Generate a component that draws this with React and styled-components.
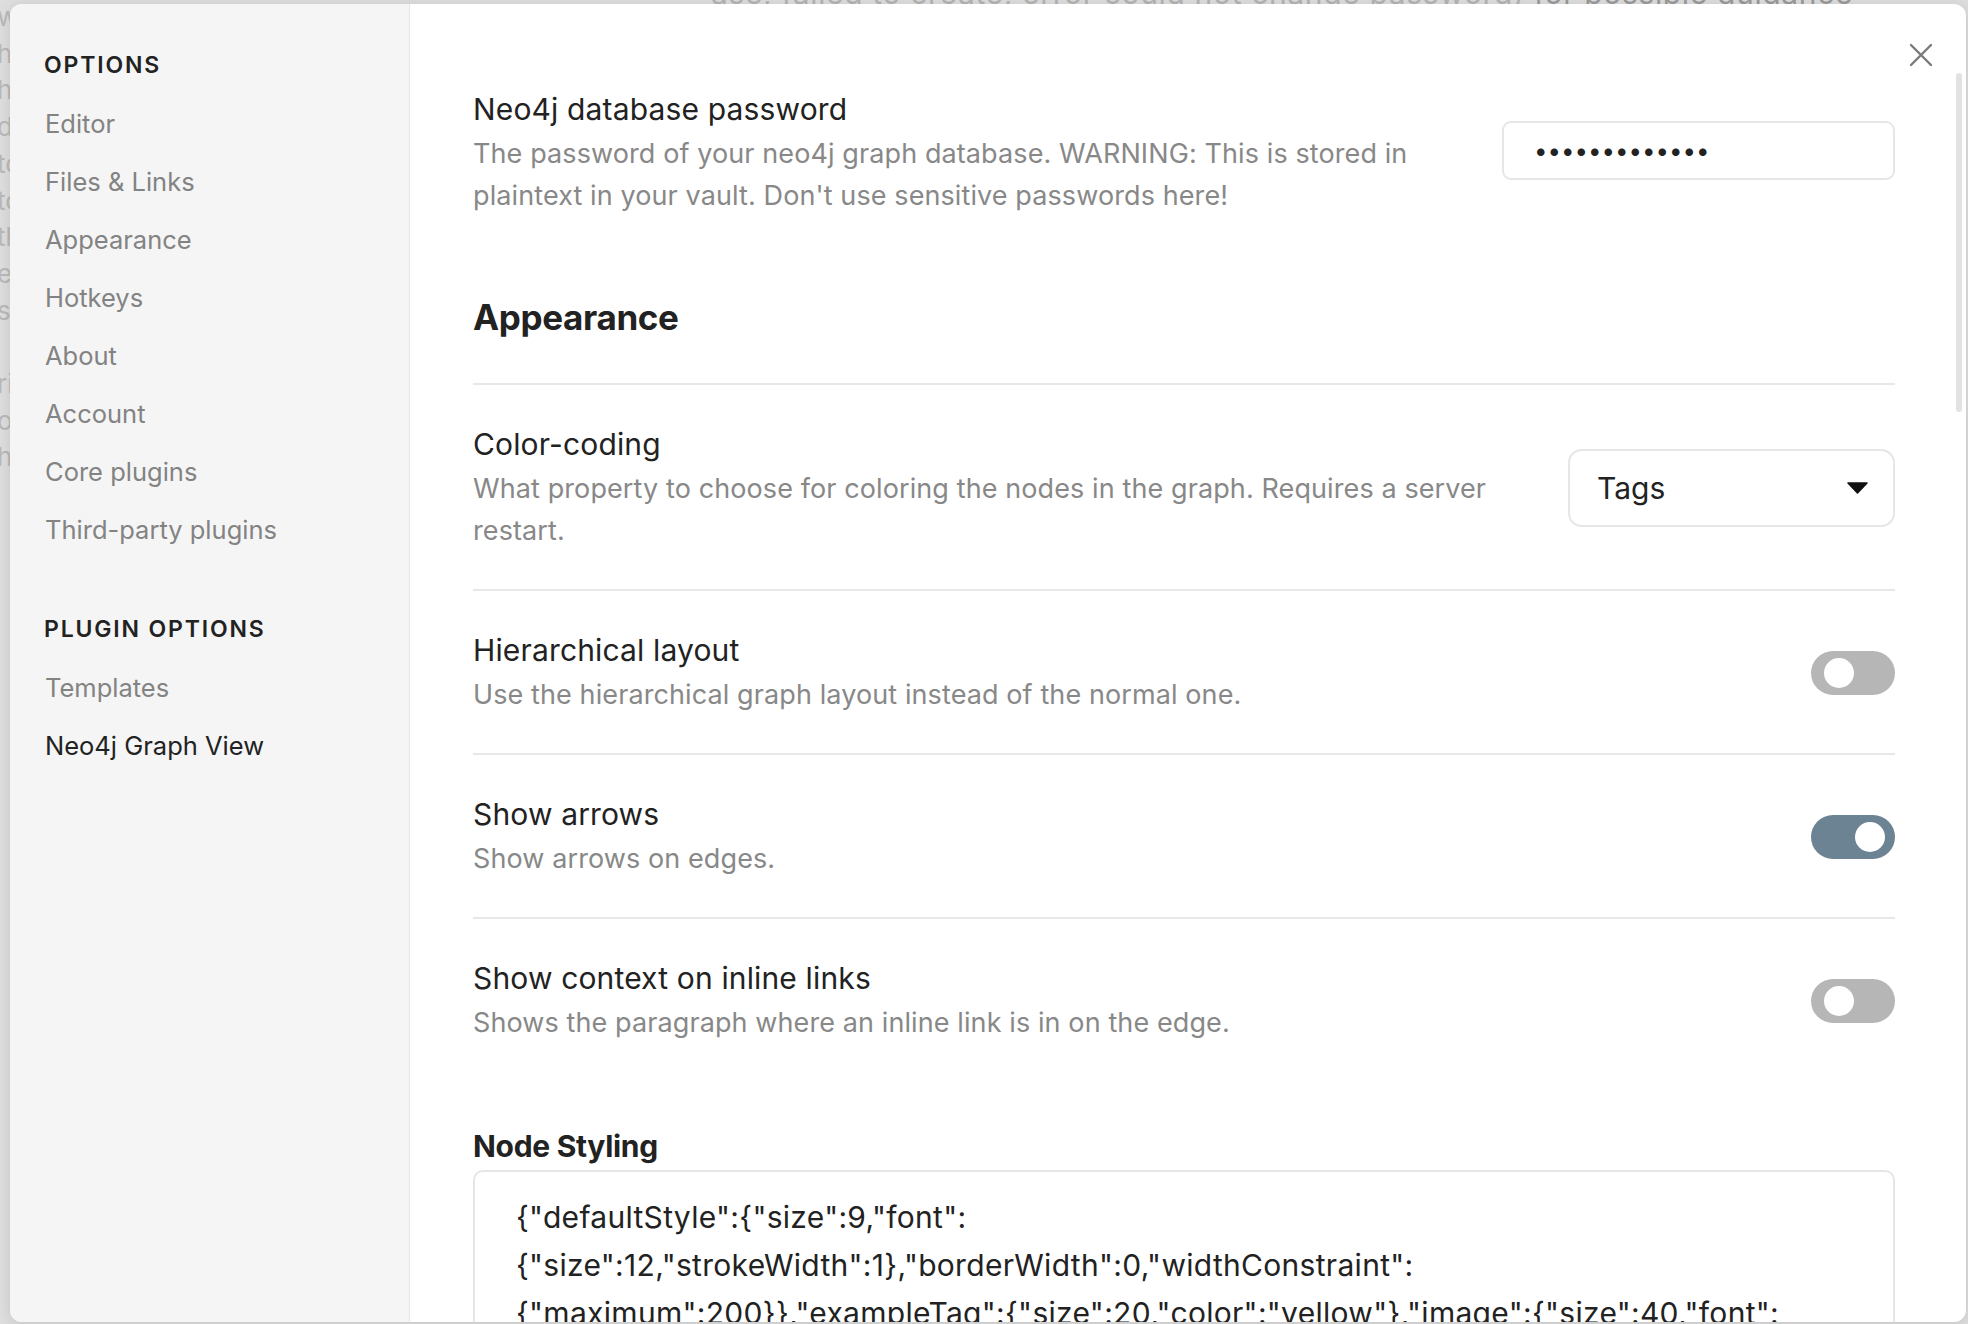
import React from 'react';
import styled, { createGlobalStyle } from 'styled-components';

const GlobalStyle = createGlobalStyle`
  html, body {
    margin: 0;
    padding: 0;
  }
  body {
    width: 1968px;
    height: 1324px;
    overflow: hidden;
    background: #dedede;
    font-family: Inter, "Noto Sans", sans-serif;
    -webkit-font-smoothing: antialiased;
  }
  * {
    box-sizing: border-box;
  }
`;

const Page = styled.div`
  position: relative;
  width: 1968px;
  height: 1324px;
  overflow: hidden;
  background: #dedede;
`;

/* the note that sits behind the settings modal */
const TopStrip = styled.div`
  height: 8px;
  overflow: hidden;
  display: flex;
  align-items: flex-end;
  padding-left: 711px;
  font-size: 30px;
  line-height: 30px;
  letter-spacing: 0.65px;
  white-space: nowrap;
  color: #b4b4b4;

  b {
    font-weight: 400;
    color: #9a9a9a;
  }
`;

const BackNote = styled.div`
  margin: -9px 0 0 -3px;
  font-size: 26px;
  line-height: 36.7px;
  color: #b9b9b9;
`;

const Modal = styled.div`
  position: absolute;
  top: 4px;
  left: 10px;
  right: 2px;
  bottom: 2px;
  display: flex;
  background: #fff;
  border-radius: 12px;
  overflow: hidden;
  box-shadow: 0 2px 14px rgba(0, 0, 0, 0.12);
`;

const Sidebar = styled.nav`
  flex: none;
  width: 400px;
  padding: 46px 0 0 24px;
  background: #f5f5f5;
  border-right: 1px solid #e6e6e6;
`;

const NavGroup = styled.div`
  margin-top: ${p => p.$gap || 0}px;
`;

const NavHeader = styled.div`
  padding-left: 10px;
  margin-bottom: 15px;
  font-size: 23px;
  line-height: 30px;
  font-weight: 600;
  letter-spacing: 0.08em;
  color: #222;
`;

const NavItem = styled.div`
  padding: 12px 11px;
  font-size: 25.5px;
  line-height: 34px;
  color: ${p => (p.$active ? '#222' : '#838383')};
`;

const Content = styled.main`
  flex: 1;
  min-width: 0;
  padding: 46px 71px 0 63px;
  overflow: hidden;
`;

const CloseButton = styled.div`
  position: absolute;
  top: 39px;
  right: 33px;
  width: 24px;
  height: 24px;
  color: #7a7a7a;
  display: flex;
`;

const ScrollThumb = styled.div`
  position: absolute;
  top: 69px;
  right: 4px;
  width: 6px;
  height: 339px;
  border-radius: 3px;
  background: #e2e2e2;
`;

const SettingItem = styled.div`
  display: flex;
  align-items: center;
  padding: 38px 0 37px;
  border-top: ${p => (p.$first ? 'none' : '2px solid #e8e8e8')};
`;

const Info = styled.div`
  flex: 1 1 auto;
  min-width: 0;
  margin-right: 36px;
`;

const Name = styled.div`
  font-size: 30px;
  line-height: 42px;
  letter-spacing: 0.15px;
  color: #222;
`;

const Desc = styled.div`
  margin-top: 3px;
  font-size: 27px;
  line-height: 42px;
  letter-spacing: 0.1px;
  color: #888;
`;

const Control = styled.div`
  flex: none;
  display: flex;
  justify-content: flex-end;
  margin-bottom: ${p => p.$lift || 0}px;
`;

const Heading = styled.h3`
  margin: 0;
  padding: 43px 0 46px;
  font-size: 35px;
  line-height: 40px;
  font-weight: 700;
  letter-spacing: -0.01em;
  color: #222;
`;

const PasswordInput = styled.input`
  width: 393px;
  height: 59px;
  padding: 0 20px 0 30px;
  border: 2px solid #e6e6e6;
  border-radius: 9px;
  background: #fff;
  font-family: Inter, sans-serif;
  font-size: 24px;
  letter-spacing: 0;
  color: #222;
  outline: none;
`;

const Select = styled.div`
  display: flex;
  align-items: center;
  justify-content: space-between;
  width: 327px;
  height: 78px;
  padding: 0 25px 0 27px;
  border: 2px solid #e6e6e6;
  border-radius: 14px;
  background: #fff;
  font-size: 30px;
  color: #222;
`;

const Toggle = styled.div`
  position: relative;
  width: 84px;
  height: 44px;
  border-radius: 22px;
  background: ${p => (p.$on ? '#6c8393' : '#b6b6b6')};

  &::after {
    content: '';
    position: absolute;
    top: 7px;
    left: ${p => (p.$on ? 44 : 13)}px;
    width: 30px;
    height: 30px;
    border-radius: 50%;
    background: #fff;
  }
`;

const SubHeading = styled.div`
  margin-top: 45px;
  font-size: 30px;
  line-height: 40px;
  font-weight: 700;
  letter-spacing: -0.01em;
  color: #222;
`;

const JsonArea = styled.textarea`
  display: block;
  margin-top: 4px;
  width: 100%;
  height: 320px;
  padding: 21px 68px 0 41px;
  border: 2px solid #e6e6e6;
  border-radius: 10px;
  background: #fff;
  font-family: Inter, sans-serif;
  font-size: 30px;
  line-height: 48px;
  letter-spacing: 0.3px;
  color: #222;
  resize: none;
  outline: none;
  overflow: hidden;
`;

const navOptions = ['Editor', 'Files & Links', 'Appearance', 'Hotkeys', 'About', 'Account', 'Core plugins', 'Third-party plugins'];
const navPlugins = ['Templates', 'Neo4j Graph View'];

const backLines = ['where', 'how', 'have', 'data', 'to', 'to', 'the', 'even', 'so', '', 'rights', 'of', 'has'];

const nodeStyle = '{"defaultStyle":{"size":9,"font":{"size":12,"strokeWidth":1},"borderWidth":0,"widthConstraint":{"maximum":200}},"exampleTag":{"size":20,"color":"yellow"},"image":{"size":40,"font":{"size":0}}}';

const ToggleRow = ({ name, desc, on }) => (
  <SettingItem>
    <Info>
      <Name>{name}</Name>
      <Desc>{desc}</Desc>
    </Info>
    <Control>
      <Toggle $on={on} />
    </Control>
  </SettingItem>
);

export default function App() {
  return (
    <Page>
      <GlobalStyle />
      <TopStrip>
        <span>
          ase, failed to create, error could not change password) <b>for possible guidance</b>
        </span>
      </TopStrip>
      <BackNote>
        {backLines.map((l, i) => (
          <div key={i}>{l || '\u00a0'}</div>
        ))}
      </BackNote>

      <Modal>
        <Sidebar>
          <NavGroup>
            <NavHeader>OPTIONS</NavHeader>
            {navOptions.map(item => (
              <NavItem key={item}>{item}</NavItem>
            ))}
          </NavGroup>
          <NavGroup $gap={55}>
            <NavHeader>PLUGIN OPTIONS</NavHeader>
            {navPlugins.map(item => (
              <NavItem key={item} $active={item === 'Neo4j Graph View'}>
                {item}
              </NavItem>
            ))}
          </NavGroup>
        </Sidebar>

        <Content>
          <SettingItem $first>
            <Info>
              <Name>Neo4j database password</Name>
              <Desc>
                The password of your neo4j graph database. WARNING: This is stored in plaintext in your vault. Don't use
                sensitive passwords here!
              </Desc>
            </Info>
            <Control $lift={5}>
              <PasswordInput type="password" value="neo4jpassword" readOnly />
            </Control>
          </SettingItem>

          <Heading>Appearance</Heading>

          <SettingItem>
            <Info>
              <Name>Color-coding</Name>
              <Desc>What property to choose for coloring the nodes in the graph. Requires a server restart.</Desc>
            </Info>
            <Control>
              <Select>
                <span>Tags</span>
                <svg width="21" height="12" viewBox="0 0 21 12">
                  <path d="M1 1h19l-9.5 10z" fill="#111" stroke="#111" strokeWidth="1.5" strokeLinejoin="round" />
                </svg>
              </Select>
            </Control>
          </SettingItem>

          <ToggleRow
            name="Hierarchical layout"
            desc="Use the hierarchical graph layout instead of the normal one."
            on={false}
          />
          <ToggleRow name="Show arrows" desc="Show arrows on edges." on />
          <ToggleRow
            name="Show context on inline links"
            desc="Shows the paragraph where an inline link is in on the edge."
            on={false}
          />

          <SubHeading>Node Styling</SubHeading>
          <JsonArea value={nodeStyle} readOnly spellCheck={false} />
        </Content>

        <CloseButton>
          <svg width="24" height="24" viewBox="0 0 24 24">
            <path d="M2 2l20 20M22 2L2 22" stroke="currentColor" strokeWidth="2.4" strokeLinecap="round" />
          </svg>
        </CloseButton>
        <ScrollThumb />
      </Modal>
    </Page>
  );
}
